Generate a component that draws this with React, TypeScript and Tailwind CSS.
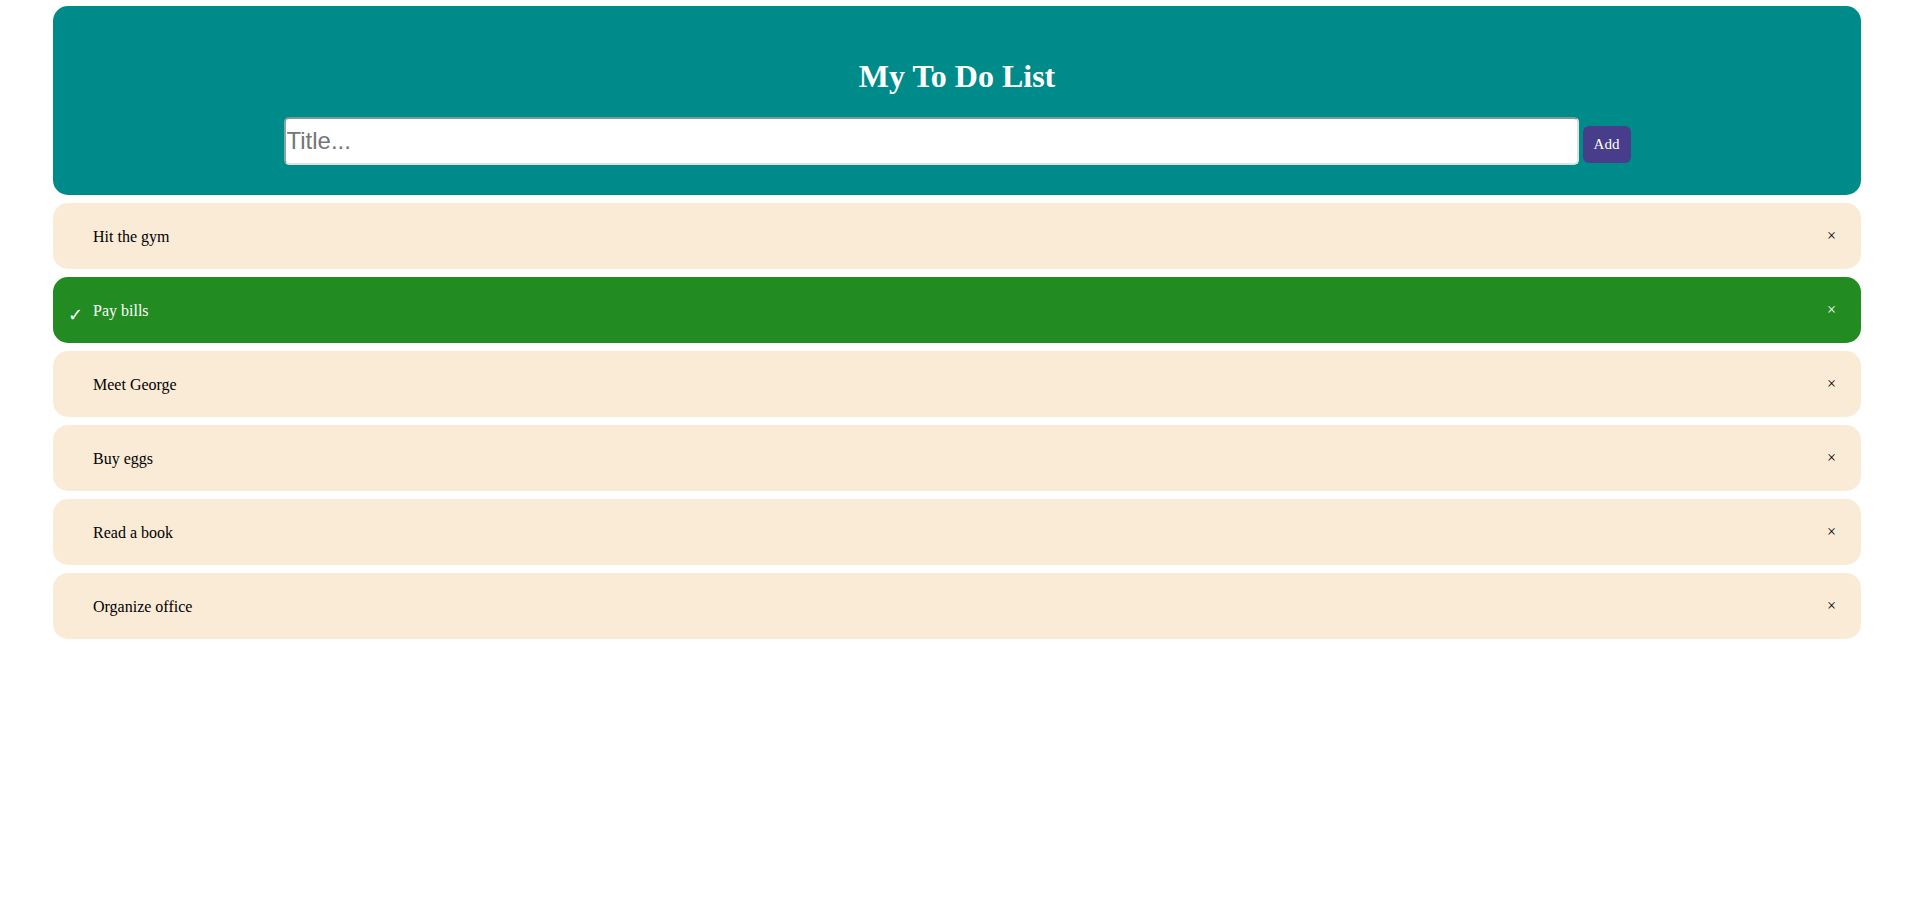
import { useState } from 'react';

interface Todo {
  id: number;
  title: string;
  done: boolean;
}

const initialTodos: Todo[] = [
  { id: 1, title: 'Hit the gym', done: false },
  { id: 2, title: 'Pay bills', done: true },
  { id: 3, title: 'Meet George', done: false },
  { id: 4, title: 'Buy eggs', done: false },
  { id: 5, title: 'Read a book', done: false },
  { id: 6, title: 'Organize office', done: false },
];

const App = () => {
  const [todos, setTodos] = useState<Todo[]>(initialTodos);
  const [title, setTitle] = useState('');

  const addTodo = () => {
    if (!title.trim()) return;
    setTodos((prev) => [...prev, { id: Date.now(), title, done: false }]);
    setTitle('');
  };

  const toggle = (id: number) =>
    setTodos((prev) => prev.map((t) => (t.id === id ? { ...t, done: !t.done } : t)));

  const remove = (id: number) => setTodos((prev) => prev.filter((t) => t.id !== id));

  return (
    <div className="min-h-screen bg-white px-[53px] pt-[6px] font-['Liberation_Serif',serif] text-[16px] text-black">
      <div className="rounded-[15px] bg-[#008b8b] pt-[31px] pb-[30px] text-center">
        <h1 className="mt-[21px] mb-[23px] text-[32px] leading-[36px] font-bold text-white">
          My To Do List
        </h1>
        <div className="flex items-end justify-center gap-[4px]">
          <input
            value={title}
            onChange={(e) => setTitle(e.target.value)}
            placeholder="Title..."
            className="h-[48px] w-[1295px] rounded-[5px] border-2 border-[#dde3e3] border-t-[#7c9898] border-l-[#8aa5a5] bg-white px-[1px] font-['Liberation_Sans',sans-serif] text-[24px] text-black placeholder:text-[#757575] outline-none"
          />
          <button
            onClick={addTodo}
            className="mb-[2px] h-[37px] w-[48px] rounded-[6px] bg-[#483d8b] text-[15px] text-white"
          >
            Add
          </button>
        </div>
      </div>

      <ul className="mt-[8px] flex flex-col gap-[8px]">
        {todos.map((todo) => (
          <li
            key={todo.id}
            onClick={() => toggle(todo.id)}
            className={`relative flex h-[66px] cursor-pointer items-center rounded-[15px] pt-[2px] pl-[40px] pr-[25px] ${
              todo.done ? 'bg-[#228b22] text-white' : 'bg-[#faebd7] text-black'
            }`}
          >
            {todo.done && (
              <span className="absolute left-[15px] top-[29px] font-['DejaVu_Sans',sans-serif] text-[18px] font-light leading-none">
                ✓
              </span>
            )}
            <span className="flex-1">{todo.title}</span>
            <span
              onClick={(e) => {
                e.stopPropagation();
                remove(todo.id);
              }}
              className="-mt-[2px] text-[16px] leading-none"
            >
              ×
            </span>
          </li>
        ))}
      </ul>
    </div>
  );
};

export default App;
